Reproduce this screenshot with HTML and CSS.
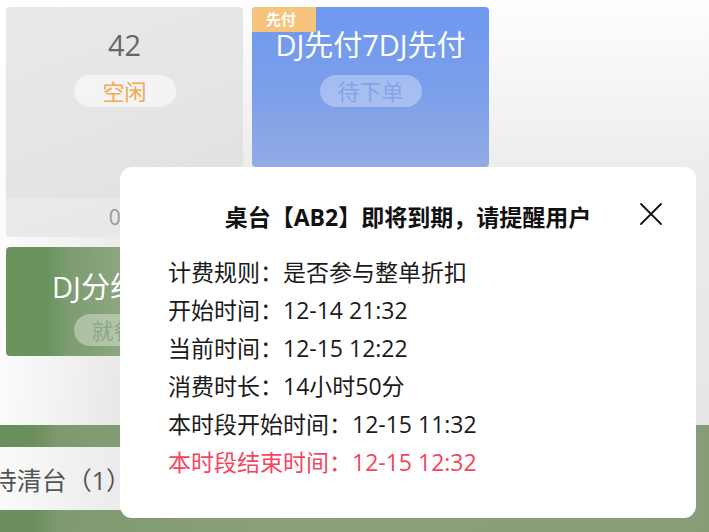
FILE: index.html
```html
<!DOCTYPE html>
<html lang="zh-CN">
<head>
<meta charset="utf-8">
<title>桌台提醒</title>
<link rel="stylesheet" href="styles.css">
</head>
<body>
<div class="page">
  <div class="top">
    <div class="grid">
      <div class="card card-idle">
        <div class="card-main">
          <div class="card-title">42</div>
          <div class="pill pill-idle">空闲</div>
        </div>
        <div class="card-foot">0/4</div>
      </div>
      <div class="card card-blue">
        <span class="badge">先付</span>
        <div class="card-main">
          <div class="card-title light">DJ先付7DJ先付</div>
          <div class="pill pill-blue">待下单</div>
        </div>
      </div>
      <div class="card card-green">
        <div class="card-title light">DJ分组桌台</div>
        <div class="pill pill-green">就餐中</div>
      </div>
    </div>
  </div>
  <div class="bottom">
    <div class="tab"><span class="tab-text">待清台（1）</span></div>
  </div>

  <div class="dialog">
    <div class="dialog-head">
      <div class="dialog-title">桌台【AB2】即将到期，请提醒用户</div>
      <button class="close" aria-label="关闭">
        <svg viewBox="0 0 24 24" width="24" height="24"><path d="M2 2 L22 22 M22 2 L2 22" stroke="#111" stroke-width="1.8" fill="none" stroke-linecap="round"/></svg>
      </button>
    </div>
    <div class="dialog-body">
      <div class="row">计费规则：是否参与整单折扣</div>
      <div class="row">开始时间：12-14 21:32</div>
      <div class="row">当前时间：12-15 12:22</div>
      <div class="row">消费时长：14小时50分</div>
      <div class="row">本时段开始时间：12-15 11:32</div>
      <div class="row row-red">本时段结束时间：12-15 12:32</div>
    </div>
  </div>
</div>
</body>
</html>
```
FILE: styles.css
```css
* { box-sizing: border-box; }
html, body { margin: 0; padding: 0; }
body {
  font-family: "Open Sans", "Noto Sans CJK SC", sans-serif;
  background: #fff;
}
.page {
  position: relative;
  width: 709px;
  height: 532px;
  overflow: hidden;
  display: flex;
  flex-direction: column;
  background: #fff;
}
.top {
  height: 425px;
  padding: 7px 6px 0;
  background:
    linear-gradient(to right, rgba(255,255,255,0.85), rgba(255,255,255,0) 130px),
    linear-gradient(to bottom, #fefefe 0, #ececec 170px, #e6e6e6 425px);
}
.grid {
  display: grid;
  grid-template-columns: 237px 237px;
  grid-template-rows: 230px 109px;
  column-gap: 9px;
  row-gap: 10px;
}
.card {
  position: relative;
  border-radius: 4px;
  overflow: hidden;
}
.card-main {
  display: flex;
  flex-direction: column;
  align-items: center;
  padding-top: 22px;
}
.card-title {
  font-size: 29px;
  line-height: 32px;
  color: #666;
  white-space: nowrap;
}
.card-title.light { color: #fff; }
.pill {
  margin-top: 14px;
  width: 102px;
  height: 32px;
  border-radius: 16px;
  font-size: 22px;
  line-height: 32px;
  text-align: center;
}
.card-idle {
  display: flex;
  flex-direction: column;
  justify-content: space-between;
  background: linear-gradient(160deg, #e9e9e9 0%, #e4e4e4 60%, #dedede 100%);
}
.pill-idle {
  background: rgba(255,255,255,0.55);
  color: #f2a84c;
}
.card-foot {
  height: 39px;
  background: rgba(255,255,255,0.25);
  color: #999;
  font-size: 21px;
  line-height: 39px;
  text-align: center;
}
.card-blue {
  align-self: start;
  height: 160px;
  background: linear-gradient(to bottom, #6f98f0 0%, #7b9eea 50%, #92abe4 100%);
}
.badge {
  position: absolute;
  left: 0;
  top: 0;
  width: 64px;
  height: 25px;
  background: #f6c47c;
  color: #fff;
  font-weight: 700;
  font-size: 15px;
  line-height: 25px;
  padding-left: 14px;
}
.pill-blue {
  background: rgba(255,255,255,0.32);
  color: #87a3e8;
}
.card-green {
  display: flex;
  flex-direction: column;
  align-items: center;
  padding-top: 24px;
  background: linear-gradient(to right, #6a935e 0, #6a935e 42px, #7c9c70 60px, #90a984 130px);
}
.pill-green {
  margin-top: 11px;
  background: rgba(255,255,255,0.35);
  color: #8ea785;
}
.bottom {
  flex: 1;
  padding-top: 22px;
  background: linear-gradient(to right, #6b8f5c 0, #6b8f5c 35px, #7f9a70 60px, #8ca07c 300px, #889c78 709px);
}
.tab {
  width: 136px;
  height: 63px;
  display: flex;
  justify-content: flex-end;
  align-items: center;
  overflow: hidden;
  background: linear-gradient(to right, #fafafa, #e9e9e9);
  padding-right: 5px;
}
.tab-text {
  white-space: nowrap;
  font-size: 25px;
  color: #555;
}
.dialog {
  position: absolute;
  left: 120px;
  top: 167px;
  width: 576px;
  height: 351px;
  background: #fff;
  border-radius: 12px;
  padding: 35px 48px 0;
}
.dialog-head {
  position: relative;
  display: flex;
  justify-content: center;
}
.dialog-title {
  font-size: 23px;
  line-height: 30px;
  font-weight: 700;
  color: #111;
}
.close {
  position: absolute;
  right: -15px;
  top: 0;
  width: 24px;
  height: 24px;
  padding: 0;
  border: 0;
  background: none;
}
.close svg { display: block; }
.dialog-body {
  margin-top: 21px;
  display: flex;
  flex-direction: column;
}
.row {
  font-size: 23px;
  line-height: 38px;
  color: #1a1a1a;
  white-space: nowrap;
}
.row-red { color: #f4455f; }
```
